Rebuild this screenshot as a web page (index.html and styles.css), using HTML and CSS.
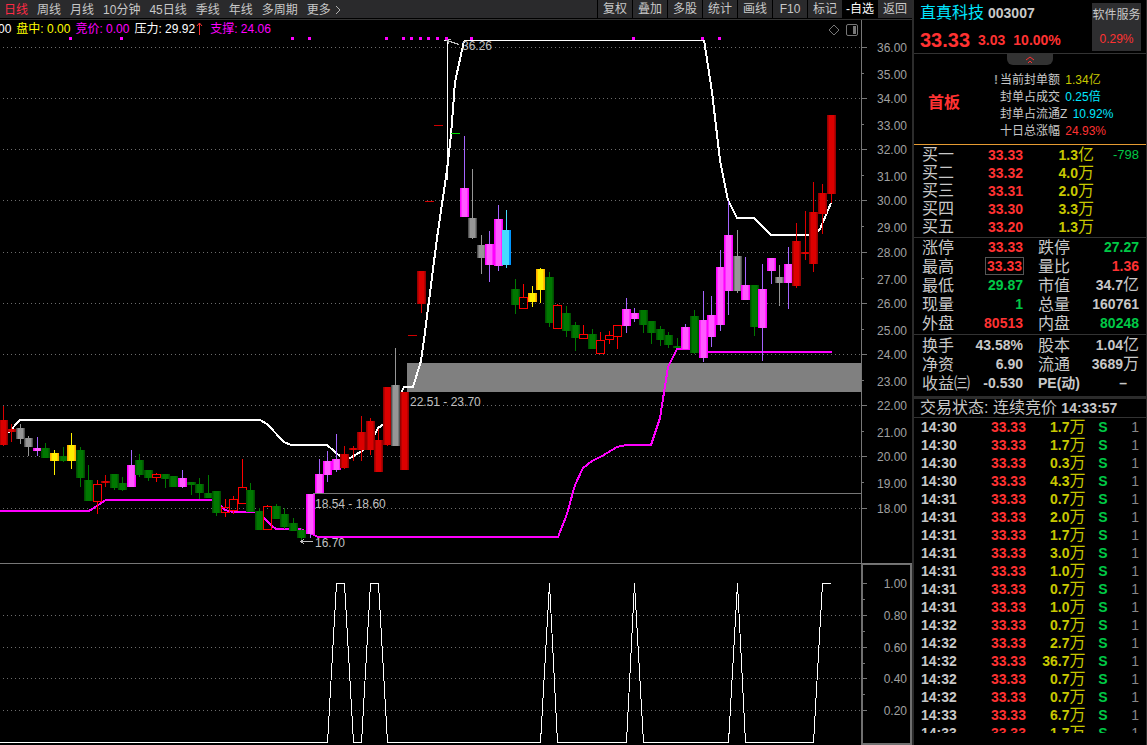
FILE: index.html
```html
<!DOCTYPE html>
<html lang="zh-CN">
<head>
<meta charset="utf-8">
<title>直真科技 003007</title>
<link rel="stylesheet" href="styles.css">
</head>
<body>
<div class="app">
  <main class="main">
    <nav class="toolbar">
      <div class="periods">
        <button class="period active">日线</button>
        <button class="period">周线</button>
        <button class="period">月线</button>
        <button class="period">10分钟</button>
        <button class="period">45日线</button>
        <button class="period">季线</button>
        <button class="period">年线</button>
        <button class="period">多周期</button>
        <button class="period more">更多<svg class="chevron" viewBox="0 0 6 10"><path d="M1 1l4 4-4 4"/></svg></button>
      </div>
      <div class="tools">
        <button class="tool">复权</button>
        <button class="tool">叠加</button>
        <button class="tool">多股</button>
        <button class="tool">统计</button>
        <button class="tool">画线</button>
        <button class="tool">F10</button>
        <button class="tool">标记</button>
        <button class="tool picked">-自选</button>
        <button class="tool">返回</button>
      </div>
    </nav>
    <div class="infobar">
      <div class="readings">
        <span>00</span>
        <span class="yellow">盘中: 0.00</span>
        <span class="magenta">竞价: 0.00</span>
        <span class="pressure">压力: 29.92<svg class="up" viewBox="0 0 7 13"><path d="M3.500 13V1M1 4l2.500-3L6 4"/></svg></span>
        <span class="magenta">支撑: 24.06</span>
      </div>
      <div class="marks">
        <svg class="mark" viewBox="0 0 12 12"><path d="M6 1l5 5-5 5-5-5z"/></svg>
        <svg class="mark" viewBox="0 0 12 12"><rect x=".5" y=".5" width="11" height="11" rx="1.500"/><path class="fill" d="M7 2h3v8H7z"/></svg>
      </div>
      <div class="axis-top"></div>
    </div>
    <svg class="chart" id="price" viewBox="0 37 912 527"></svg>
    <svg class="chart" id="signal" viewBox="0 564 912 181"></svg>
  </main>

  <aside class="panel">
    <header class="quote">
      <div class="quote-main">
        <div class="title"><span class="name">直真科技</span><span class="code">003007</span></div>
        <div class="last"><span class="price">33.33</span><span>3.03</span><span>10.00%</span></div>
      </div>
      <div class="sector"><span>软件服务</span><span class="red">0.29%</span></div>
    </header>
    <section class="board">
      <button class="collapse" aria-label="收起"><svg viewBox="0 0 10 8"><path d="M1 4l4-3 4 3M3 7l2-2 2 2"/></svg></button>
      <strong class="tag">首板</strong>
      <ul class="facts">
        <li><i class="alert">!</i>当前封单额 <span class="gold">1.34亿</span></li>
        <li>封单占成交 <span class="cyan">0.25倍</span></li>
        <li>封单占流通Z <span class="cyan">10.92%</span></li>
        <li>十日总涨幅 <span class="red">24.93%</span></li>
      </ul>
    </section>
    <table class="grid bids">
      <colgroup><col class="w44"><col class="w57"><col class="w71"><col class="w45"></colgroup>
      <tbody>
        <tr><th>买一</th><td class="red">33.33</td><td class="gold">1.3<b>亿</b></td><td class="green thin">-798</td></tr>
        <tr><th>买二</th><td class="red">33.32</td><td class="gold">4.0<b>万</b></td><td></td></tr>
        <tr><th>买三</th><td class="red">33.31</td><td class="gold">2.0<b>万</b></td><td></td></tr>
        <tr><th>买四</th><td class="red">33.30</td><td class="gold">3.3<b>万</b></td><td></td></tr>
        <tr><th>买五</th><td class="red">33.20</td><td class="gold">1.3<b>万</b></td><td></td></tr>
      </tbody>
    </table>
    <table class="grid stats">
      <colgroup><col class="w44"><col class="w57"><col class="w57"><col class="w59"></colgroup>
      <tbody>
        <tr><th>涨停</th><td class="red">33.33</td><th class="second">跌停</th><td class="green">27.27</td></tr>
        <tr><th>最高</th><td class="red"><span class="boxed">33.33</span></td><th class="second">量比</th><td class="red">1.36</td></tr>
        <tr><th>最低</th><td class="green">29.87</td><th class="second">市值</th><td>34.7<b>亿</b></td></tr>
        <tr><th>现量</th><td class="green">1</td><th class="second">总量</th><td>160761</td></tr>
        <tr><th>外盘</th><td class="red">80513</td><th class="second">内盘</th><td class="green">80248</td></tr>
      </tbody>
    </table>
    <table class="grid stats basics">
      <colgroup><col class="w50"><col class="w51"><col class="w57"><col class="w59"></colgroup>
      <tbody>
        <tr><th>换手</th><td>43.58%</td><th class="second">股本</th><td>1.04<b>亿</b></td></tr>
        <tr><th>净资</th><td>6.90</td><th class="second">流通</th><td>3689<b>万</b></td></tr>
        <tr><th>收益㈢</th><td>-0.530</td><th class="second small">PE(动)</th><td class="none">–</td></tr>
      </tbody>
    </table>
    <div class="status">交易状态: 连续竞价 <span class="clock">14:33:57</span></div>
    <div class="ticks">
      <table class="grid trades">
        <colgroup><col class="w44"><col class="w60"><col class="w59"><col class="w22"><col class="w31"></colgroup>
        <tbody id="trades"></tbody>
      </table>
    </div>
  </aside>
</div>
<script src="chart.js"></script>
</body>
</html>
```

FILE: styles.css
```css
* { box-sizing: border-box; }

body {
  margin: 0;
  background: #000;
  color: #c8c8c8;
  font: 12px/16px "Liberation Sans", "Noto Sans CJK SC", sans-serif;
  overflow: hidden;
}

button {
  margin: 0;
  padding: 0;
  border: 0;
  background: none;
  color: inherit;
  font: inherit;
  white-space: nowrap;
}

.app {
  display: grid;
  grid-template-columns: minmax(0, 1fr) 235px;
  height: 100vh;
}

.main { min-width: 0; }

/* toolbar */
.toolbar {
  display: flex;
  justify-content: space-between;
  height: 20px;
  background: #2a2a2c;
  border-bottom: 1px solid #333;
  box-shadow: inset 0 -1px #000;
}
.periods { display: flex; gap: 9px; padding-left: 4px; }
.period { line-height: 18px; }
.active { color: #ff2b45; }
.more { display: flex; align-items: center; gap: 4px; }
.chevron { width: 6px; height: 10px; fill: none; stroke: #b0b0b0; }
.tools { display: flex; }
.tool {
  width: 35px;
  height: 18px;
  line-height: 18px;
  border-left: 1px solid #000;
  text-align: center;
}
.picked { background: #000; color: #fff; }

/* indicator readings */
.infobar {
  display: flex;
  height: 17px;
  line-height: 18px;
}
.readings { display: flex; flex: 1; gap: 5px; color: #fff; white-space: nowrap; }
.readings span:first-child { margin-left: -2px; }
.pressure { display: flex; align-items: center; gap: 1px; margin-right: 2px; }
.up { width: 7px; height: 13px; fill: none; stroke: #ff3232; }
.marks { display: flex; align-items: center; gap: 6px; padding: 2px 3px 0 0; }
.mark { width: 12px; height: 12px; fill: none; stroke: #777; }
.mark .fill { fill: #777; stroke: none; }
.axis-top { width: 51px; border-left: 1px solid #777; }

.yellow { color: #ff0; }
.magenta { color: #f0f; }
.red { color: #ff3232; }
.green { color: #00c846; }
.gold { color: #c8c800; }
.cyan { color: #00e6ff; }

/* charts */
.chart { display: block; width: 100%; height: auto; shape-rendering: crispEdges; }
.chart text { fill: #a0a0a0; font-size: 12px; }
.chart .note { fill: #c0c0c0; }
.dots { stroke: #6c6c6c; stroke-dasharray: 1 3; }
.axis { stroke: #777; fill: none; }
.axis-box { stroke: #707070; stroke-width: 2; fill: none; }
.band { fill: #808080; }
.flag { fill: #f0f; }
.upper { stroke: #fff; stroke-width: 2; fill: none; }
.lower { stroke: #f0f; stroke-width: 2; fill: none; }
.thin-line { stroke: #fff; fill: none; }
.arrow { stroke: #c0c0c0; fill: none; }
.dash-red { stroke: #d00000; }
.dash-green { stroke: #00e000; }

/* side panel */
.panel {
  display: flex;
  flex-direction: column;
  min-height: 0;
  height: 100vh;
  padding-bottom: 12px;
  border-left: 2px solid #2c2c2c;
  border-right: 1px solid #2c2c2c;
}
.quote {
  display: flex;
  justify-content: space-between;
  height: 54px;
  padding: 3px 5px 2px 6px;
  border-bottom: 1px solid #333;
}
.title { display: flex; gap: 4px; line-height: 20px; }
.name { color: #00e6ff; font-size: 16px; }
.code { font-size: 14px; font-weight: 700; }
.last {
  display: flex;
  align-items: center;
  gap: 8px;
  padding-top: 4px;
  color: #ff3232;
  font-size: 14px;
  font-weight: 700;
  line-height: 26px;
}
.price { font-size: 20px; }
.sector {
  display: flex;
  flex-direction: column;
  gap: 8px;
  width: 49px;
  height: 48px;
  padding-top: 4px;
  background: #2e2e30;
  text-align: center;
  white-space: nowrap;
}
.board {
  display: grid;
  grid-template-columns: 86px 1fr;
  grid-template-rows: 11px auto;
  height: 91px;
  border-bottom: 1px solid #e69b32;
}
.collapse {
  grid-column: 1 / 3;
  justify-self: center;
  display: flex;
  justify-content: center;
  align-items: center;
  width: 46px;
  height: 11px;
  border-radius: 0 0 6px 6px;
  background: #333;
}
.collapse svg { width: 10px; height: 8px; fill: none; stroke: #ff3232; }
.tag { padding: 26px 0 0 14px; color: #ff3232; font-size: 16px; line-height: 24px; }
.facts { margin: 0; padding: 7px 0 0; list-style: none; line-height: 17px; white-space: nowrap; }
.facts span { padding-left: 2px; }
.alert {
  display: inline-block;
  width: 6px;
  margin-left: -6px;
  color: #999;
  font-style: normal;
  font-weight: 700;
}

.grid {
  width: 100%;
  table-layout: fixed;
  border-collapse: separate;
  border-spacing: 0;
  padding: 1px 7px 1px 8px;
  border-bottom: 1px solid #333;
  font-size: 14px;
  white-space: nowrap;
}
.grid th, .grid td { height: 18px; padding: 0; line-height: 18px; }
.grid th { text-align: left; font-size: 16px; font-weight: 400; }
.grid td { text-align: right; font-weight: 700; }
.grid td b { font-size: 16px; font-weight: 400; line-height: 16px; }
.grid td.thin { font-size: 13px; font-weight: 400; }
.grid .second { padding-left: 15px; }
.grid .small { font-size: 14px; font-weight: 700; }
.grid .none { padding-right: 12px; }
.stats { padding-top: 0; }
.stats th, .stats td { height: 19px; line-height: 19px; }
.boxed { padding: 0 1px; outline: 1px solid #555; }
.basics { padding: 1px 7px 3px 8px; border-bottom: 3px solid #2c2c2c; }
.status {
  height: 19px;
  padding-left: 6px;
  border-bottom: 1px solid #333;
  font-size: 16px;
  line-height: 18px;
  white-space: pre;
}
.clock { font-size: 14px; font-weight: 700; }
.ticks { flex: 1; min-height: 0; overflow: hidden; }
.trades { border: 0; padding: 0 7px 0 7px; }
.trades td:first-child { text-align: left; }
.trades td.count { color: #888; font-weight: 400; }

.w22 { width: 22px; }
.w31 { width: 31px; }
.w44 { width: 44px; }
.w45 { width: 45px; }
.w50 { width: 50px; }
.w51 { width: 51px; }
.w57 { width: 57px; }
.w59 { width: 59px; }
.w60 { width: 60px; }
.w71 { width: 71px; }
```

FILE: chart.js
```javascript
// Candle: [centre x, colour, high, body top, body bottom, low]
const candles = [
  [3,'r',406,420,445,446],[11,'r',424,429,432,442],[20,'w',424,428,439,444],[28,'w',436,438,447,456],
  [37,'m',437,448,451,456],[45,'g',443,448,458,458],[54,'y',450,453,461,475],[63,'g',447,456,461,462],
  [71,'y',433,445,461,469],[80,'g',447,450,478,487],[88,'g',465,480,501,501],[97,'h',480,484,502,514],
  [105,'r',475,481,483,487],[114,'g',474,474,488,490],[122,'g',477,483,490,491],[131,'m',450,465,487,487],
  [139,'g',454,460,475,477],[148,'g',470,470,478,481],[156,'h',473,474,478,482],[165,'g',474,474,479,488],
  [173,'g',476,476,487,487],[182,'m',470,478,487,488],[191,'g',482,482,485,495],[199,'g',478,484,493,499],
  [208,'g',475,493,498,498],[216,'g',491,491,513,516],[225,'h',499,507,513,517],[233,'h',496,499,511,514],
  [242,'h',459,487,504,504],[250,'g',483,490,512,512],[259,'g',508,511,530,530],[267,'h',505,506,530,530],
  [276,'g',504,506,519,519],[284,'g',508,514,527,529],[293,'g',518,523,531,531],[301,'g',528,530,538,540],
  [310,'m',494,494,534,538],[319,'m',459,474,493,493],[327,'m',451,461,475,482],[336,'m',434,459,470,472],
  [344,'r',446,454,468,469],[353,'r',446,448,450,461],[361,'r',416,432,450,461],[370,'r',418,421,450,455],
  [378,'r',429,440,472,472],[387,'r',387,387,445,446],[395,'w',348,385,446,446],[404,'r',392,392,470,470],
  [421,'r',271,271,304,313],[464,'m',136,188,217,217],[472,'w',169,218,238,239],[481,'w',235,245,258,274],
  [489,'m',231,244,265,282],[498,'m',205,219,266,271],[506,'c',210,230,265,268],[515,'g',279,289,305,314],
  [523,'h',284,297,309,309],[532,'y',286,293,302,307],[540,'y',268,269,290,303],[549,'g',272,277,323,327],
  [557,'h',304,305,329,329],[566,'g',306,313,331,337],[575,'g',322,325,338,351],[583,'h',325,334,339,339],
  [592,'g',329,334,349,349],[600,'h',332,340,354,354],[609,'h',331,335,340,344],[617,'h',325,325,337,349],
  [626,'m',298,309,326,333],[634,'m',308,313,319,322],[643,'g',310,310,325,333],[651,'g',321,321,333,344],
  [660,'g',326,329,340,346],[668,'g',332,335,345,348],[677,'g',338,346,348,348],[685,'m',324,327,349,349],
  [694,'g',310,316,353,354],[703,'m',291,320,358,362],[711,'m',296,315,337,347],[720,'m',250,267,325,331],
  [728,'m',201,235,291,315],[737,'w',230,256,291,293],[745,'m',257,285,300,300],[754,'g',285,285,327,336],
  [762,'m',264,289,328,361],[771,'m',258,258,271,284],[779,'w',265,277,283,306],[788,'m',247,264,283,309],
  [796,'r',223,241,286,288],[805,'r',211,252,254,260],[813,'r',182,212,264,272],[822,'r',184,193,214,234],
  [831,'r',115,115,194,203]
];

// edge, shade, face, wick
const palette = {
  r: ['#960000', '#b80000', '#dc0000', '#dc0000'],
  g: ['#005000', '#006400', '#007800', '#007800'],
  m: ['#ff00ff', '#ff28ff', '#ff5aff', '#a564ff'],
  w: ['#505050', '#787878', '#969696', '#969696'],
  y: ['#ffaa00', '#ffc800', '#fff000', '#fff000'],
  c: ['#46dcff', '#46dcff', '#46dcff', '#46dcff']
};

const rect = (x, y, w, h, fill) => `<rect x="${x}" y="${y}" width="${w}" height="${h}" fill="${fill}"/>`;
const line = (cls, x1, y1, x2, y2) => `<line class="${cls}" x1="${x1}" y1="${y1}" x2="${x2}" y2="${y2}"/>`;
const poly = (cls, points) => `<polyline class="${cls}" points="${points}"/>`;
const label = (x, y, text, anchor, cls) => `<text x="${x}" y="${y}" text-anchor="${anchor}" class="${cls}">${text}</text>`;

function candle([x, kind, high, top, bottom, low]) {
  if (kind === 'h') {
    return rect(x, high, 1, top - high, '#ff0000') + rect(x, bottom, 1, low - bottom, '#ff0000') +
      `<rect x="${x - 3.5}" y="${top + 0.5}" width="8" height="${bottom - top - 1}" fill="none" stroke="#ff0000"/>`;
  }
  const [edge, shade, face, wick] = palette[kind];
  const h = bottom - top;
  return rect(x, high, 1, low - high, wick) + rect(x - 4, top, 9, h, edge) +
    rect(x - 3, top, 7, h, shade) + rect(x - 2, top, 5, h, face) +
    (kind === 'c' ? rect(x + 3, top, 2, h, '#0096ff') : '');
}

function drawPrice() {
  let s = '';
  const rows = [47, 98, 149, 200, 252, 303, 354, 405, 456, 508];
  rows.forEach((y, i) => {
    s += line('dots', 3, y + 0.5, 861, y + 0.5) + line('axis', 861, y + 0.5, 867, y + 0.5);
    s += label(907, y + 5, (36 - 2 * i).toFixed(2), 'end', '');
    if (i < rows.length - 1) {
      const mid = Math.round((y + rows[i + 1]) / 2);
      s += line('axis', 861, mid + 0.5, 864, mid + 0.5) + label(907, mid + 6, (35 - 2 * i).toFixed(2), 'end', '');
    }
  });
  s += line('axis', 861.5, 37, 861.5, 564) + line('axis', 0, 563.5, 912, 563.5);
  s += '<rect class="band" x="407" y="363" width="454" height="29"/>';
  s += line('axis', 313, 493.5, 861, 493.5);
  s += poly('upper', '8,433 20,420 260,420 267,424 284,442 291,445 327,445 341,457 350,458 362,451 372,440 378,428 384,424 392,410 402,391 404,387 413,387 421,361 424,340 437,238 447,170 451,135 455,82 464,41');
  s += poly('thin-line', '464,40.5 704,40.5');
  s += poly('upper', '704,40 712,92 720,160 728,200 737,218 754,218 771,235 813,235 820,229 831,203');
  s += poly('thin-line', '444,40.5 447.5,40.5 447.5,180');
  s += poly('lower', '0,511 89,511 106,500 215,500 225,510 233,512 258,512 272,526 276,529 301,529 312,534 318,537 558,537 567,514 575,485 583,468 592,461 602,456 617,447 626,445 651,445 660,418 668,367 677,349 692,349 700,352 832,352');
  s += candles.map(candle).join('');
  s += line('dash-red', 408, 335.5, 417, 335.5) + line('dash-red', 425, 201.5, 434, 201.5);
  s += line('dash-red', 434, 125.5, 443, 125.5) + line('dash-green', 451, 133.5, 460, 133.5);
  [69, 120, 291, 308, 385, 402, 410, 419, 427, 436, 445, 470, 632, 701, 718].forEach(x => {
    s += `<rect class="flag" x="${x}" y="37" width="3" height="3"/>`;
  });
  s += poly('arrow', '459,44.5 447,40.5 451,39') + poly('arrow', '447,40.5 449,44');
  s += label(462, 50, '36.26', 'start', 'note');
  s += poly('arrow', '313,541.5 301,541.5 304,539') + poly('arrow', '301,541.5 304,544');
  s += label(315, 547, '16.70', 'start', 'note');
  s += label(315, 508, '18.54 - 18.60', 'start', 'note');
  s += label(410, 406, '22.51 - 23.70', 'start', 'note');
  document.getElementById('price').innerHTML = s;
}

function drawSignal() {
  let s = '';
  [583, 615, 647, 678, 710].forEach((y, i) => {
    if (i) s += line('dots', 3, y + 0.5, 861, y + 0.5);
    s += line('axis', 863, y + 0.5, 867, y + 0.5) + label(907, y + 5, (1 - 0.2 * i).toFixed(2), 'end', '');
    if (i < 4) s += line('axis', 863, y + 16.5, 865, y + 16.5);
  });
  s += '<rect class="axis-box" x="862" y="564" width="49" height="180"/>';
  s += poly('thin-line', '0,742.5 327.5,742.5 336.5,583.5 344.5,583.5 353.5,742.5 361.5,742.5 370.5,583.5 378.5,583.5 387.5,742.5 540.5,742.5 549.5,583.5 557.5,742.5 626.5,742.5 634.5,583.5 643.5,742.5 728.5,742.5 737.5,583.5 745.5,742.5 813.5,742.5 822.5,583.5 831,583.5');
  document.getElementById('signal').innerHTML = s;
}

const trades = [
  ['14:30', '1.7'], ['14:30', '1.7'], ['14:30', '0.3'], ['14:30', '4.3'], ['14:31', '0.7'], ['14:31', '2.0'],
  ['14:31', '1.7'], ['14:31', '3.0'], ['14:31', '1.0'], ['14:31', '0.7'], ['14:31', '1.0'], ['14:32', '0.7'],
  ['14:32', '2.7'], ['14:32', '36.7'], ['14:32', '0.7'], ['14:32', '0.7'], ['14:33', '6.7'], ['14:33', '1.7']
];

drawPrice();
drawSignal();
document.getElementById('trades').innerHTML = trades.map(([time, volume]) =>
  `<tr><td>${time}</td><td class="red">33.33</td><td class="gold">${volume}<b>万</b></td><td class="green">S</td><td class="count">1</td></tr>`
).join('');
```
